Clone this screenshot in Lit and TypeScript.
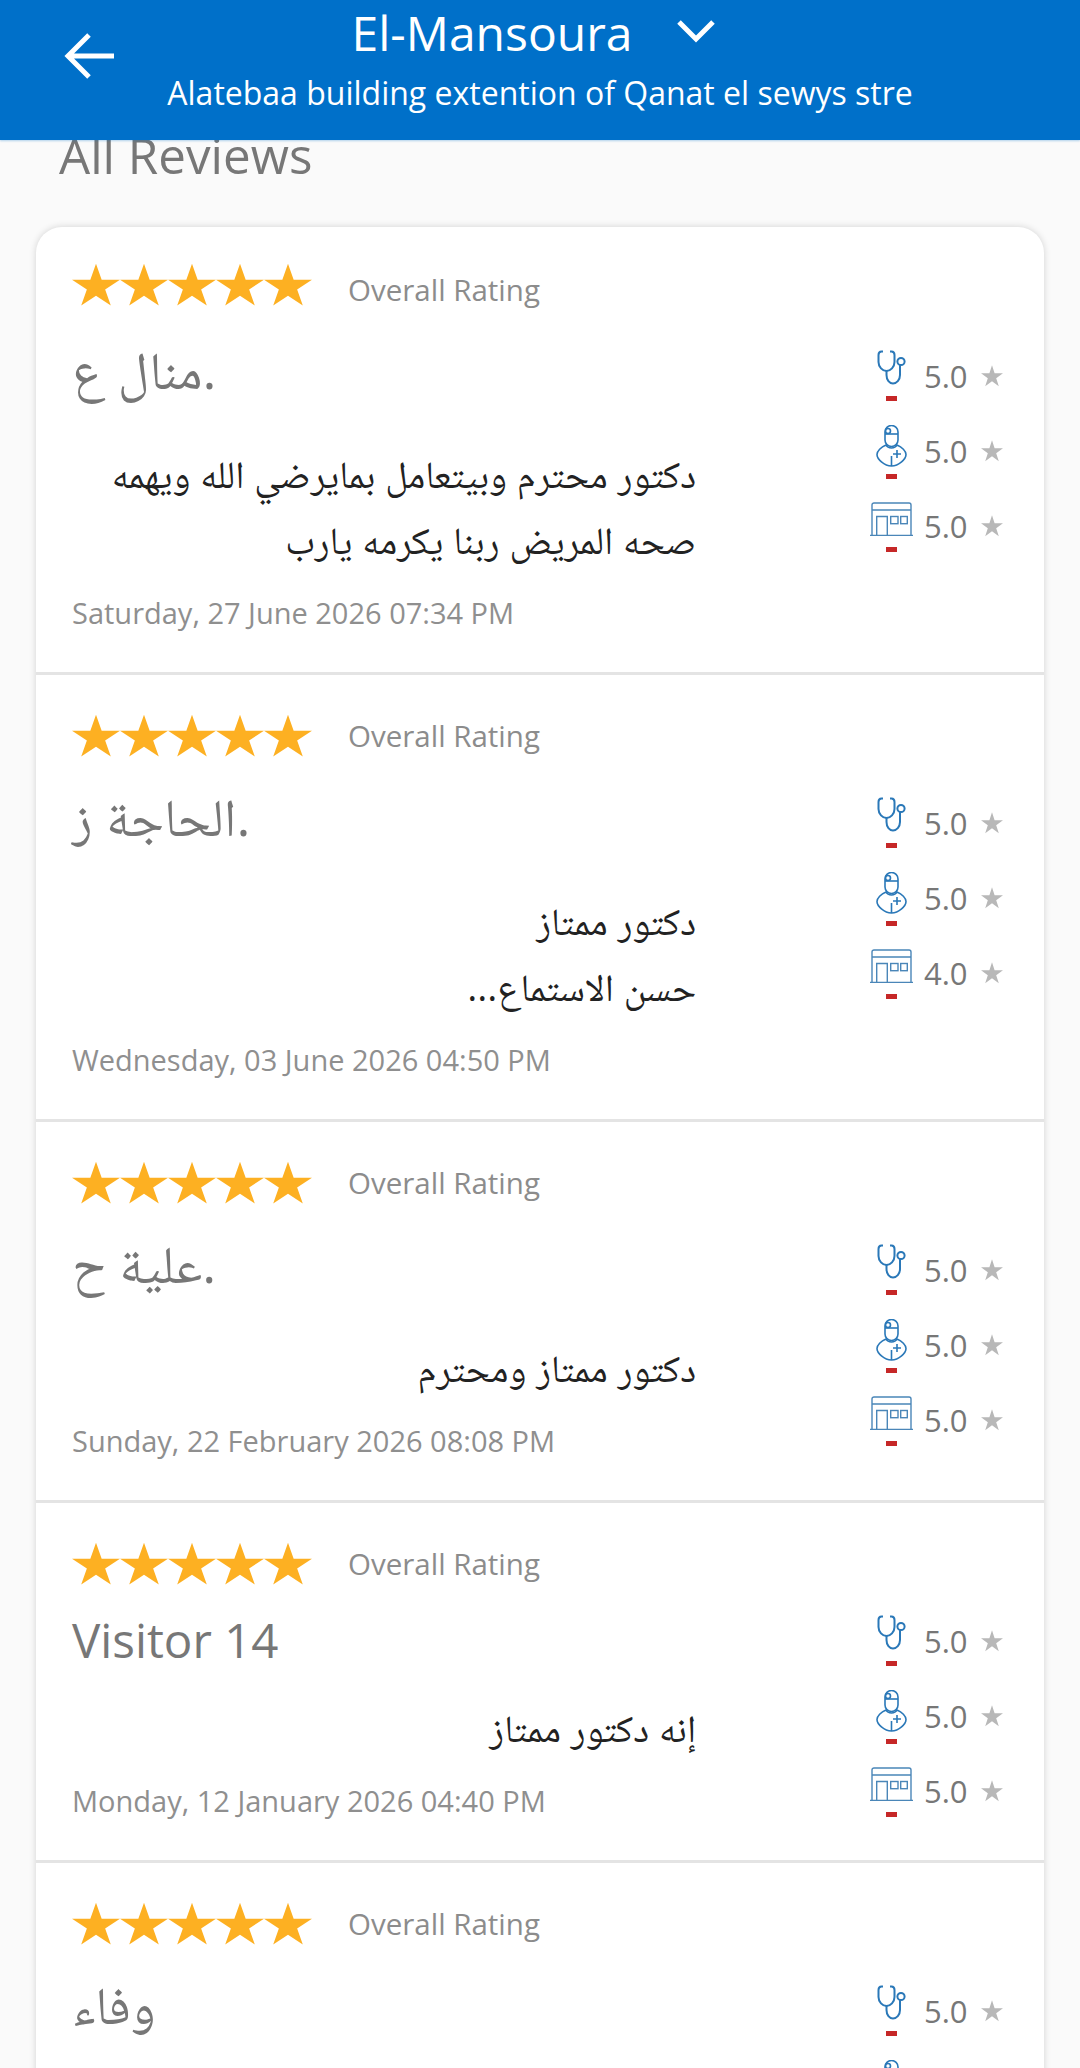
import { LitElement, html, css, svg } from "lit";
import { customElement } from "lit/decorators.js";

const reviews = [
  { name: "منال ع.", ar: true, lines: ["دكتور محترم وبيتعامل بمايرضي الله ويهمه", "صحه المريض ربنا يكرمه يارب"], date: "Saturday, 27 June 2026 07:34 PM", r: ["5.0", "5.0", "5.0"] },
  { name: "الحاجة ز.", ar: true, lines: ["دكتور ممتاز", "حسن الاستماع..."], date: "Wednesday, 03 June 2026 04:50 PM", r: ["5.0", "5.0", "4.0"] },
  { name: "علية ح.", ar: true, lines: ["دكتور ممتاز ومحترم"], date: "Sunday, 22 February 2026 08:08 PM", r: ["5.0", "5.0", "5.0"] },
  { name: "Visitor 14", ar: false, lines: ["إنه دكتور ممتاز"], date: "Monday, 12 January 2026 04:40 PM", r: ["5.0", "5.0", "5.0"] },
  { name: "وفاء", ar: true, lines: [], date: "", r: ["5.0", ""] },
];

const STAR = "M12 .4l2.83 8.710h9.150l-7.410 5.380 2.830 8.710L12 17.810l-7.400 5.390 2.830-8.710-7.410-5.380h9.150z";

const icons = [
  { cls: "i0", vb: "0 0 30 35", body: svg`<path d="M7 1.500H5.500C3.500 1.500 2.500 3 2.500 5v7c0 5 4 9 8 9s8-4 8-9V5c0-2-1-3.500-3-3.500H14"/><path d="M10.500 21v4c0 5 3 8.500 6.500 8.500s7-3.500 7-8.500V15"/><circle cx="25" cy="11.500" r="3.600"/>` },
  { cls: "i1", vb: "0 0 31 42", body: svg`<path d="M9 7a6.500 6.500 0 1 1 13 0v8a6.500 6.500 0 0 1-13 0z"/><path d="M9 9h13"/><circle cx="12" cy="6" r="2.500"/><path d="M10 20C5 22 1 26 1 29.500 1 34 8 41 15.500 41S30 34 30 29.500c0-3.500-4-7.500-9-9.500-1 2-3 3-5.500 3s-4.500-1-5.500-3z"/><path d="M15.500 31v10M21 25v8M17 29h8"/>` },
  { cls: "i2", vb: "0 0 43 34", body: svg`<path d="M2 33.500V3a2 2 0 0 1 2-2h35a2 2 0 0 1 2 2v30.500M2 8h39M0 33.500h43"/><path d="M6.700 33.500V14.500h10.600v19"/><rect x="20.700" y="14.500" width="7.300" height="7.200"/><rect x="30.700" y="14.500" width="6.600" height="7.200"/>` },
];

@customElement("app-root")
export class AppRoot extends LitElement {
  static styles = css`
    :host { display: block; width: 1080px; height: 2068px; overflow: hidden; background: #fafafa; font-family: "Open Sans", "Noto Naskh Arabic", "DejaVu Sans", sans-serif; }
    .bar { position: relative; z-index: 2; height: 140px; background: #0070c9; color: #fff; box-shadow: 0 1px 2px rgba(0,112,201,.3); display: flex; flex-direction: column; align-items: center; }
    .back { position: absolute; left: 64px; top: 32px; width: 50px; height: 48px; }
    .title { display: flex; align-items: center; height: 64px; font-size: 48px; padding-right: 14px; white-space: nowrap; }
    .chev { width: 38px; height: 24px; margin-left: 44px; margin-top: -3px; }
    .sub { font-size: 32px; line-height: 58px; white-space: nowrap; }
    .head { height: 100px; padding-left: 59px; margin-top: -13px; font-size: 49.300px; line-height: 56px; color: #777; }
    .card { margin: 0 36px; background: #fff; border-radius: 26px 26px 0 0; box-shadow: 0 0 7px rgba(0,0,0,.16); }
    .row { padding: 35px 0 0 36px; border-bottom: 3px solid #e4e4e4; display: flex; flex-direction: column; }
    .row + .row { padding-top: 38px; }
    .row:last-child { border-bottom: none; }
    .top { display: flex; align-items: center; height: 46px; margin-bottom: 1px; }
    .row:first-child .top { margin-bottom: 5px; }
    .stars { display: flex; width: 240px; margin-right: 36px; }
    .stars svg { width: 48px; height: 44px; fill: #fdb022; flex: none; }
    .overall { font-size: 29.500px; color: #8c8c8c; margin-top: -2px; }
    .row:first-child .overall { margin-top: 8px; }
    .body { display: flex; justify-content: space-between; }
    .main { flex: none; width: 624px; }
    .name { font-size: 47.500px; color: #777; padding-top: 16px; height: 106px; line-height: 72px; box-sizing: border-box; }
    .name.ar { height: 127px; font-size: 53px; padding-top: 11px; line-height: 90px; }
    .comment { direction: rtl; font-size: 38.300px; line-height: 66px; color: #222; white-space: nowrap; }
    .date { font-size: 29px; line-height: 50px; color: #8f8f8f; padding: 16px 0 34px; }
    .scores { display: flex; flex-direction: column; padding: 25px 41px 0 0; }
    .scores.la { padding-top: 15px; }
    .score { display: grid; grid-template-columns: 44px 68px 22px; align-items: center; height: 75px; }
    .icon { height: 75px; display: flex; flex-direction: column; align-items: center; box-sizing: border-box; padding-top: 12px; }
    .icon svg { fill: none; stroke: #2a78b8; flex: none; }
    .icon i { display: block; width: 11px; height: 5px; background: #c62828; flex: none; }
    .i0 svg { width: 30px; height: 35px; stroke-width: 2; }
    .i0 i { margin-top: 11px; }
    .i1 svg { width: 31px; height: 42px; stroke-width: 1.600; }
    .i1 i { margin-top: 7px; }
    .i2 { padding-top: 14px; }
    .i2 svg { width: 43px; height: 34px; stroke: #4a86b8; stroke-width: 1.400; }
    .i2 i { margin-top: 11px; }
    .val { font-size: 31px; color: #777; padding-left: 11px; }
    .sm { width: 22px; height: 22px; fill: #b8b8b8; justify-self: center; }
  `;

  render() {
    return html`
      <div class="bar">
        <svg class="back" viewBox="0 0 50 48" fill="none" stroke="#fff" stroke-width="5"><path d="M50 24H5M25 3L4 24l21 21"/></svg>
        <div class="title">El-Mansoura
          <svg class="chev" viewBox="0 0 38 24" fill="none" stroke="#fff" stroke-width="5"><path d="M2 3l17 17L36 3"/></svg>
        </div>
        <div class="sub">Alatebaa building extention of Qanat el sewys stre</div>
      </div>
      <div class="head">All Reviews</div>
      <div class="card">
        ${reviews.map((r) => html`
          <div class="row">
            <div class="top">
              <div class="stars">${[0,1,2,3,4].map(() => html`<svg viewBox="0 0 24 24" preserveAspectRatio="none"><path d="${STAR}"/></svg>`)}</div>
              <div class="overall">Overall Rating</div>
            </div>
            <div class="body">
              <div class="main">
                <div class="name ${r.ar ? "ar" : ""}">${r.name}</div>
                ${r.lines.map((l) => html`<div class="comment">${l}</div>`)}
                <div class="date">${r.date}</div>
              </div>
              <div class="scores ${r.ar ? "" : "la"}">
                ${r.r.map((v, i) => html`
                  <div class="score">
                    <div class="icon ${icons[i].cls}"><svg viewBox="${icons[i].vb}">${icons[i].body}</svg><i></i></div>
                    <div class="val">${v}</div>
                    <svg class="sm" viewBox="0 0 24 24"><path d="${STAR}"/></svg>
                  </div>`)}
              </div>
            </div>
          </div>`)}
      </div>
    `;
  }
}
